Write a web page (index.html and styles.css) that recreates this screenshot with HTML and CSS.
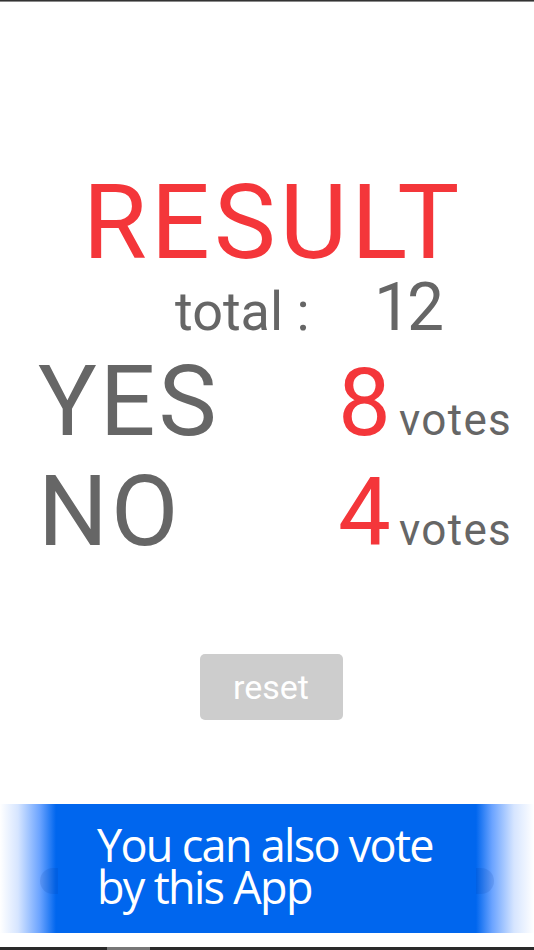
FILE: index.html
```html
<!DOCTYPE html>
<html>
<head>
<meta charset="utf-8">
<link rel="stylesheet" href="styles.css">
</head>
<body>
<div class="screen">
  <div class="topline"></div>
  <main class="content">
    <h1 class="title">RESULT</h1>
    <div class="total">
      <span class="total-label">total :</span>
      <span class="total-num">12</span>
    </div>
    <div class="row">
      <span class="answer">YES</span>
      <span class="count"><span class="num">8</span><span class="unit">votes</span></span>
    </div>
    <div class="row">
      <span class="answer">NO</span>
      <span class="count"><span class="num">4</span><span class="unit">votes</span></span>
    </div>
    <div class="reset-wrap">
      <button class="reset">reset</button>
    </div>
  </main>
  <div class="banner">
    <span class="chev chev-left"></span>
    <span class="chev chev-right"></span>
    <p class="banner-text">You can also vote<br>by this App</p>
  </div>
  <div class="bottomline"><span class="home"></span></div>
</div>
</body>
</html>
```

FILE: styles.css
```css
* { box-sizing: border-box; }
html, body { margin: 0; padding: 0; background: #fff; }
body { font-family: Roboto, "Noto Sans CJK JP", sans-serif; color: #666; }
.screen { width: 534px; height: 950px; display: flex; flex-direction: column; overflow: hidden; }
.topline { height: 2px; border-top: 1px solid #333; background: #8a8a8a; flex: none; }
.content { flex: 1; display: flex; flex-direction: column; padding-top: 169px; }
.title { margin: 0; font-weight: 400; font-size: 104px; line-height: 1; color: #f4363a; text-align: center; padding-left: 12px; letter-spacing: 4px; }
.total { display: flex; align-items: baseline; height: 65px; margin-bottom: 7px; }
.total-label { font-size: 54px; line-height: 65px; margin-left: 175px; width: 199px; }
.total-num { font-size: 66px; line-height: 65px; color: #666; letter-spacing: -4px; }
.row { display: flex; align-items: baseline; height: 110px; }
.answer { font-size: 98px; line-height: 110px; width: 338px; padding-left: 38px; letter-spacing: 3px; }
.count { display: flex; align-items: baseline; }
.num { font-size: 94px; line-height: 110px; color: #f4363a; width: 61px; letter-spacing: -4px; }
.unit { font-size: 44px; color: #666; letter-spacing: 1.3px; }
.reset-wrap { display: flex; justify-content: center; margin-top: 87px; padding-left: 8px; }
.reset { width: 143px; height: 66px; border: none; border-radius: 5px; background: #cdcdcd; color: #fff; font-family: Roboto, sans-serif; font-size: 34px; padding: 0; }
.banner { position: relative; flex: none; height: 129px; margin-bottom: 14px; background: linear-gradient(to right, #fff 0px, #d6e5ff 18px, #6aa3ff 40px, #0066ee 56px, #0066ee 476px, #6aa3ff 492px, #d6e5ff 514px, #fff 534px); }
.banner-text { margin: 0; padding: 20px 0 0 97px; font-family: "Open Sans", "Noto Sans", sans-serif; font-weight: 500; font-size: 45px; line-height: 42px; color: #fff; letter-spacing: -1.7px; }
.chev { position: absolute; top: 64px; width: 18px; height: 26px; background: rgba(0, 50, 150, 0.12); }
.chev-left { left: 40px; border-radius: 13px 0 0 13px; }
.chev-right { right: 40px; border-radius: 0 13px 13px 0; }
.bottomline { height: 3px; flex: none; background: #2a2a2a; position: relative; }
.home { position: absolute; left: 107px; width: 43px; top: 0; height: 3px; background: #777; }
```
